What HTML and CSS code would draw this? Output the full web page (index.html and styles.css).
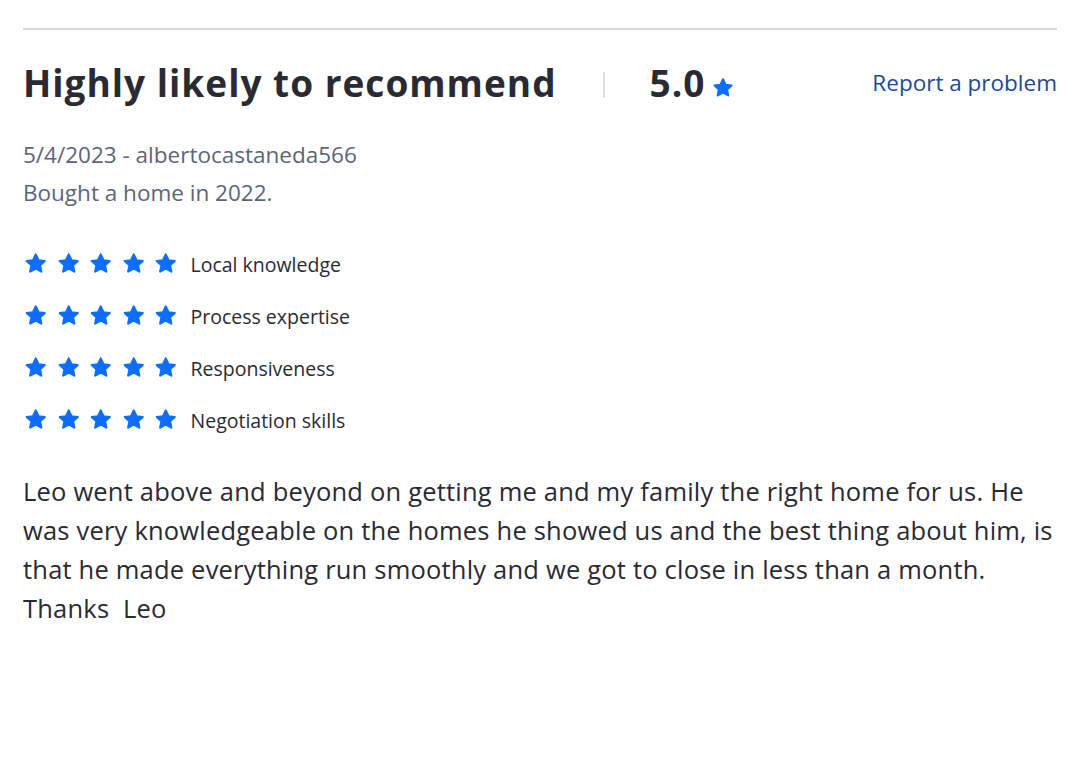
FILE: index.html
```html
<!DOCTYPE html>
<html lang="en">
<head>
<meta charset="utf-8">
<title>Review</title>
<link rel="stylesheet" href="styles.css">
</head>
<body>
<main class="review">
  <hr class="rule">
  <header class="head">
    <h1 class="title">Highly likely to recommend</h1>
    <span class="sep"></span>
    <span class="score">5.0</span>
    <svg class="score-star" viewBox="0 0 24 24"><path d="M12 3.2l2.6 5.5 5.9.7-4.4 4.1 1.2 5.9L12 16.5l-5.3 2.9 1.2-5.9-4.4-4.1 5.9-.7z"/></svg>
    <a class="report" href="#">Report a problem</a>
  </header>
  <p class="meta">5/4/2023 - albertocastaneda566</p>
  <p class="meta">Bought a home in 2022.</p>
  <ul class="ratings">
    <li class="rating"><span class="stars"><svg viewBox="0 0 24 24"><path d="M12 3.2l2.6 5.5 5.9.7-4.4 4.1 1.2 5.9L12 16.5l-5.3 2.9 1.2-5.9-4.4-4.1 5.9-.7z"/></svg><svg viewBox="0 0 24 24"><path d="M12 3.2l2.6 5.5 5.9.7-4.4 4.1 1.2 5.9L12 16.5l-5.3 2.9 1.2-5.9-4.4-4.1 5.9-.7z"/></svg><svg viewBox="0 0 24 24"><path d="M12 3.2l2.6 5.5 5.9.7-4.4 4.1 1.2 5.9L12 16.5l-5.3 2.9 1.2-5.9-4.4-4.1 5.9-.7z"/></svg><svg viewBox="0 0 24 24"><path d="M12 3.2l2.6 5.5 5.9.7-4.4 4.1 1.2 5.9L12 16.5l-5.3 2.9 1.2-5.9-4.4-4.1 5.9-.7z"/></svg><svg viewBox="0 0 24 24"><path d="M12 3.2l2.6 5.5 5.9.7-4.4 4.1 1.2 5.9L12 16.5l-5.3 2.9 1.2-5.9-4.4-4.1 5.9-.7z"/></svg></span><span class="label">Local knowledge</span></li>
    <li class="rating"><span class="stars"><svg viewBox="0 0 24 24"><path d="M12 3.2l2.6 5.5 5.9.7-4.4 4.1 1.2 5.9L12 16.5l-5.3 2.9 1.2-5.9-4.4-4.1 5.9-.7z"/></svg><svg viewBox="0 0 24 24"><path d="M12 3.2l2.6 5.5 5.9.7-4.4 4.1 1.2 5.9L12 16.5l-5.3 2.9 1.2-5.9-4.4-4.1 5.9-.7z"/></svg><svg viewBox="0 0 24 24"><path d="M12 3.2l2.6 5.5 5.9.7-4.4 4.1 1.2 5.9L12 16.5l-5.3 2.9 1.2-5.9-4.4-4.1 5.9-.7z"/></svg><svg viewBox="0 0 24 24"><path d="M12 3.2l2.6 5.5 5.9.7-4.4 4.1 1.2 5.9L12 16.5l-5.3 2.9 1.2-5.9-4.4-4.1 5.9-.7z"/></svg><svg viewBox="0 0 24 24"><path d="M12 3.2l2.6 5.5 5.9.7-4.4 4.1 1.2 5.9L12 16.5l-5.3 2.9 1.2-5.9-4.4-4.1 5.9-.7z"/></svg></span><span class="label">Process expertise</span></li>
    <li class="rating"><span class="stars"><svg viewBox="0 0 24 24"><path d="M12 3.2l2.6 5.5 5.9.7-4.4 4.1 1.2 5.9L12 16.5l-5.3 2.9 1.2-5.9-4.4-4.1 5.9-.7z"/></svg><svg viewBox="0 0 24 24"><path d="M12 3.2l2.6 5.5 5.9.7-4.4 4.1 1.2 5.9L12 16.5l-5.3 2.9 1.2-5.9-4.4-4.1 5.9-.7z"/></svg><svg viewBox="0 0 24 24"><path d="M12 3.2l2.6 5.5 5.9.7-4.4 4.1 1.2 5.9L12 16.5l-5.3 2.9 1.2-5.9-4.4-4.1 5.9-.7z"/></svg><svg viewBox="0 0 24 24"><path d="M12 3.2l2.6 5.5 5.9.7-4.4 4.1 1.2 5.9L12 16.5l-5.3 2.9 1.2-5.9-4.4-4.1 5.9-.7z"/></svg><svg viewBox="0 0 24 24"><path d="M12 3.2l2.6 5.5 5.9.7-4.4 4.1 1.2 5.9L12 16.5l-5.3 2.9 1.2-5.9-4.4-4.1 5.9-.7z"/></svg></span><span class="label">Responsiveness</span></li>
    <li class="rating"><span class="stars"><svg viewBox="0 0 24 24"><path d="M12 3.2l2.6 5.5 5.9.7-4.4 4.1 1.2 5.9L12 16.5l-5.3 2.9 1.2-5.9-4.4-4.1 5.9-.7z"/></svg><svg viewBox="0 0 24 24"><path d="M12 3.2l2.6 5.5 5.9.7-4.4 4.1 1.2 5.9L12 16.5l-5.3 2.9 1.2-5.9-4.4-4.1 5.9-.7z"/></svg><svg viewBox="0 0 24 24"><path d="M12 3.2l2.6 5.5 5.9.7-4.4 4.1 1.2 5.9L12 16.5l-5.3 2.9 1.2-5.9-4.4-4.1 5.9-.7z"/></svg><svg viewBox="0 0 24 24"><path d="M12 3.2l2.6 5.5 5.9.7-4.4 4.1 1.2 5.9L12 16.5l-5.3 2.9 1.2-5.9-4.4-4.1 5.9-.7z"/></svg><svg viewBox="0 0 24 24"><path d="M12 3.2l2.6 5.5 5.9.7-4.4 4.1 1.2 5.9L12 16.5l-5.3 2.9 1.2-5.9-4.4-4.1 5.9-.7z"/></svg></span><span class="label">Negotiation skills</span></li>
  </ul>
  <p class="body">Leo went above and beyond on getting me and my family the right home for us. He was very knowledgeable on the homes he showed us and the best thing about him, is that he made everything run smoothly and we got to close in less than a month. Thanks&nbsp; Leo</p>
</main>
</body>
</html>
```
FILE: styles.css
```css
html, body {
  margin: 0;
  padding: 0;
  background: #ffffff;
}
body {
  font-family: "Open Sans", "Noto Sans", sans-serif;
  color: #2a2a33;
}
.review {
  padding: 28px 23px 0 23px;
}
.rule {
  margin: 0;
  border: 0;
  border-top: 2px solid #d9d9d9;
}
.head {
  display: flex;
  align-items: center;
  margin-top: 27px;
  height: 52px;
}
.title {
  margin: 0;
  font-size: 37px;
  font-weight: 700;
  letter-spacing: 1px;
  line-height: 52px;
  color: #2a2a33;
}
.sep {
  width: 2px;
  height: 26px;
  background: #dedede;
  margin: 4px 45px 0 46px;
}
.score {
  font-size: 37px;
  font-weight: 700;
  letter-spacing: 1px;
  line-height: 52px;
}
.score-star {
  width: 24px;
  height: 24px;
  fill: #0d6efd;
  stroke: #0d6efd;
  stroke-width: 2;
  stroke-linejoin: round;
  margin: 10px 0 0 6px;
}
.report {
  margin-left: auto;
  font-size: 22.5px;
  color: #1a4a94;
  text-decoration: none;
  margin-top: -2px;
}
.meta {
  margin: 0;
  font-size: 22.5px;
  line-height: 38px;
  color: #5c6577;
}
.meta:first-of-type {
  margin-top: 27px;
}
.ratings {
  list-style: none;
  margin: 37px 0 0 0;
  padding: 0;
  display: flex;
  flex-direction: column;
  gap: 22px;
}
.rating {
  display: flex;
  align-items: center;
  height: 30px;
}
.stars {
  display: flex;
  gap: 7px;
}
.stars svg {
  width: 25.5px;
  height: 25.5px;
  fill: #0d6efd;
  stroke: #0d6efd;
  stroke-width: 2;
  stroke-linejoin: round;
}
.label {
  margin-left: 12px;
  font-size: 19.5px;
  color: #2a2a33;
}
.body {
  margin: 37px 0 0 0;
  font-size: 25.5px;
  letter-spacing: 0.2px;
  line-height: 39px;
  color: #2a2a33;
  max-width: 1035px;
}
```
